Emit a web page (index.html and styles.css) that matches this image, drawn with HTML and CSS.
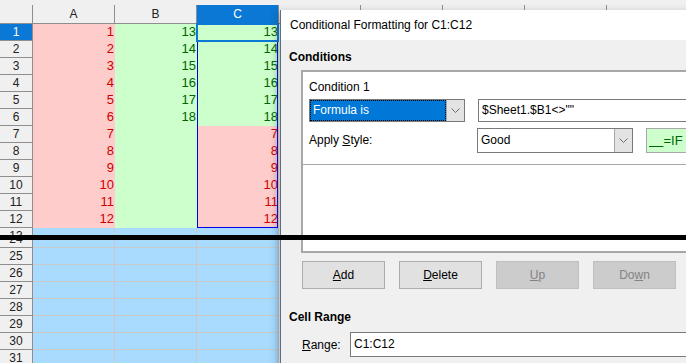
FILE: index.html
```html
<!DOCTYPE html>
<html lang="en">

<head>
    <meta charset="UTF-8">
    <title>Conditional Formatting</title>
    <link rel="stylesheet" href="styles.css">
</head>

<body>
    <div class="screen">

        <div class="sheet">
            <div class="row head">
                <div class="corner"></div>
                <div class="colhead">A</div>
                <div class="colhead">B</div>
                <div class="colhead active">C</div>
                <div class="colhead"></div>
                <div class="colhead"></div>
                <div class="colhead"></div>
                <div class="colhead"></div>
                <div class="colhead"></div>
            </div>

            <div class="row"><div class="rowhead active">1</div><div class="cell bad">1</div><div class="cell good">13</div><div class="cell good">13</div></div>
            <div class="row"><div class="rowhead">2</div><div class="cell bad">2</div><div class="cell good">14</div><div class="cell good">14</div></div>
            <div class="row"><div class="rowhead">3</div><div class="cell bad">3</div><div class="cell good">15</div><div class="cell good">15</div></div>
            <div class="row"><div class="rowhead">4</div><div class="cell bad">4</div><div class="cell good">16</div><div class="cell good">16</div></div>
            <div class="row"><div class="rowhead">5</div><div class="cell bad">5</div><div class="cell good">17</div><div class="cell good">17</div></div>
            <div class="row"><div class="rowhead">6</div><div class="cell bad">6</div><div class="cell good">18</div><div class="cell good">18</div></div>
            <div class="row"><div class="rowhead">7</div><div class="cell bad">7</div><div class="cell good"></div><div class="cell bad">7</div></div>
            <div class="row"><div class="rowhead">8</div><div class="cell bad">8</div><div class="cell good"></div><div class="cell bad">8</div></div>
            <div class="row"><div class="rowhead">9</div><div class="cell bad">9</div><div class="cell good"></div><div class="cell bad">9</div></div>
            <div class="row"><div class="rowhead">10</div><div class="cell bad">10</div><div class="cell good"></div><div class="cell bad">10</div></div>
            <div class="row"><div class="rowhead">11</div><div class="cell bad">11</div><div class="cell good"></div><div class="cell bad">11</div></div>
            <div class="row"><div class="rowhead">12</div><div class="cell bad">12</div><div class="cell good"></div><div class="cell bad">12</div></div>

            <div class="row cut-top"><div class="rowhead">13</div><div class="cell blank"></div><div class="cell blank"></div><div class="cell blank"></div></div>
            <div class="gap"></div>
            <div class="row cut-bottom"><div class="rowhead">24</div><div class="cell blank"></div><div class="cell blank"></div><div class="cell blank"></div></div>
            <div class="row"><div class="rowhead">25</div><div class="cell blank"></div><div class="cell blank"></div><div class="cell blank"></div></div>
            <div class="row"><div class="rowhead">26</div><div class="cell blank"></div><div class="cell blank"></div><div class="cell blank"></div></div>
            <div class="row"><div class="rowhead">27</div><div class="cell blank"></div><div class="cell blank"></div><div class="cell blank"></div></div>
            <div class="row"><div class="rowhead">28</div><div class="cell blank"></div><div class="cell blank"></div><div class="cell blank"></div></div>
            <div class="row"><div class="rowhead">29</div><div class="cell blank"></div><div class="cell blank"></div><div class="cell blank"></div></div>
            <div class="row"><div class="rowhead">30</div><div class="cell blank"></div><div class="cell blank"></div><div class="cell blank"></div></div>
            <div class="row"><div class="rowhead">31</div><div class="cell blank"></div><div class="cell blank"></div><div class="cell blank"></div></div>

            <!-- selection of C1:C12 and the cell cursor -->
            <div class="range-mark"></div>
            <div class="cursor"></div>
        </div>

        <div class="dialog">
            <div class="titlebar">Conditional Formatting for C1:C12</div>
            <div class="dialog-body">
                <div class="section-label">Conditions</div>

                <div class="cond-list">
                    <div class="cond">
                        <div class="cond-title">Condition 1</div>
                        <div class="cond-row">
                            <div class="combo focused">
                                <span class="combo-text">Formula is</span>
                                <span class="combo-btn">
                                    <svg width="9" height="5" viewBox="0 0 9 5"><path d="M0.5 0.5 L4.5 4.5 L8.5 0.5" fill="none" stroke="#6d6d6d" stroke-width="1"/></svg>
                                </span>
                            </div>
                            <div class="field wide">$Sheet1.$B1&lt;&gt;""</div>
                        </div>
                        <div class="cond-row style-row">
                            <div class="cond-label">Apply <u>S</u>tyle:</div>
                            <div class="combo">
                                <span class="combo-text">Good</span>
                                <span class="combo-btn">
                                    <svg width="9" height="5" viewBox="0 0 9 5"><path d="M0.5 0.5 L4.5 4.5 L8.5 0.5" fill="none" stroke="#6d6d6d" stroke-width="1"/></svg>
                                </span>
                            </div>
                            <div class="preview"><u>&nbsp;&nbsp;&nbsp;&nbsp;</u>=IF</div>
                        </div>
                    </div>
                </div>

                <div class="buttons">
                    <button class="btn"><u>A</u>dd</button>
                    <button class="btn"><u>D</u>elete</button>
                    <button class="btn" disabled><u>U</u>p</button>
                    <button class="btn" disabled>Do<u>w</u>n</button>
                </div>

                <div class="section-label range-label">Cell Range</div>
                <div class="range-row">
                    <span class="range-name"><u>R</u>ange:</span>
                    <div class="field range-field">C1:C12</div>
                </div>
            </div>
        </div>

        <div class="cut-line"></div>
    </div>
</body>

</html>
```

FILE: styles.css
```css
body {
    margin: 0;
    font-family: 'Liberation Sans', Arial, sans-serif;
    font-size: 12px;
    color: #000;
    background-color: #fff;
    overflow: hidden;
}

.screen {
    position: relative;
    width: 686px;
    height: 363px;
    overflow: hidden;
}

/* spreadsheet */

.sheet {
    position: relative;
    padding-top: 5px;
    background: linear-gradient(#f0f0f0 0, #f0f0f0 5px, #fff 5px);
}

.row {
    display: grid;
    grid-template-columns: 33px repeat(8, 82px);
    height: 17px;
}

.row.head {
    height: 19px;
}

.corner,
.colhead,
.rowhead,
.cell {
    box-sizing: border-box;
    height: 100%;
}

.corner,
.colhead {
    background-color: #f0f0f0;
    border-right: 1px solid #8e8e8e;
    border-bottom: 1px solid #8e8e8e;
    text-align: center;
    line-height: 18px;
    font-size: 12px;
    color: #222;
}

.colhead.active,
.rowhead.active {
    background-color: #0a78d4;
    color: #fff;
}

.rowhead {
    background-color: #f0f0f0;
    border-right: 1px solid #8e8e8e;
    border-bottom: 1px solid #8e8e8e;
    text-align: center;
    line-height: 16px;
    font-size: 12px;
    color: #222;
}

.cell {
    text-align: right;
    padding-right: 1px;
    line-height: 16px;
    font-size: 13px;
}

.cell.bad {
    background-color: #ffcccc;
    color: #cc0000;
}

.cell.good {
    background-color: #ccffcc;
    color: #006600;
}

.cell.blank {
    background-color: #a9dbfe;
    border-right: 1px solid #c9c9c9;
    border-bottom: 1px solid #c9c9c9;
}

.row.cut-top {
    height: 7px;
    overflow: hidden;
}

.row.cut-top > div {
    height: 17px;
}

.gap {
    height: 5px;
}

.row.cut-bottom {
    height: 8px;
    overflow: hidden;
}

.row.cut-bottom > div {
    height: 17px;
    margin-top: -9px;
}

.range-mark {
    position: absolute;
    left: 197px;
    top: 24px;
    width: 81px;
    height: 204px;
    box-sizing: border-box;
    border: 1px solid #0000ee;
}

.cursor {
    position: absolute;
    left: 196px;
    top: 23px;
    width: 83px;
    height: 19px;
    box-sizing: border-box;
    border: 2px solid #0a78d4;
}

/* dialog window */

.dialog {
    position: absolute;
    left: 280px;
    top: 10px;
    width: 430px;
    height: 370px;
    background-color: #f0f0f0;
    border-left: 1px solid #5d6e80;
    box-shadow: -5px 0 7px -2px rgba(40, 60, 90, 0.35);
}

.titlebar {
    height: 30px;
    line-height: 30px;
    padding-left: 9px;
    background-color: #fff;
    font-size: 12px;
}

.dialog-body {
    padding: 9px 0 0 8px;
}

.section-label {
    font-weight: bold;
    line-height: 16px;
}

.cond-list {
    margin: 5px 0 0 12px;
    height: 179px;
    background-color: #fff;
    border: 2px solid #a7a7a7;
    border-right: none;
}

.cond {
    padding: 7px 0 11px 6px;
    border-bottom: 1px solid #a7a7a7;
    overflow: hidden;
}

.cond-title {
    line-height: 16px;
    margin-bottom: 4px;
}

.cond-row {
    display: flex;
    gap: 13px;
    height: 23px;
}

.cond-row > * {
    flex-shrink: 0;
}

.style-row {
    height: 25px;
    margin-top: 6px;
}

.cond-label {
    width: 155px;
    line-height: 25px;
}

.combo {
    display: flex;
    width: 156px;
    box-sizing: border-box;
    border: 1px solid #7a7a7a;
    background-color: #fff;
}

.combo-text {
    flex: 1;
    padding-left: 3px;
    line-height: 23px;
}

.combo.focused .combo-text {
    background-color: #0078d7;
    color: #fff;
    outline: 1px dotted #000;
    outline-offset: -1px;
    line-height: 21px;
}

.combo-btn {
    display: flex;
    align-items: center;
    justify-content: center;
    width: 17px;
    background-color: #e3e3e3;
    border-left: 1px solid #a8a8a8;
}

.field {
    box-sizing: border-box;
    border: 1px solid #7a7a7a;
    background-color: #fff;
    padding-left: 3px;
    line-height: 21px;
}

.field.wide {
    width: 260px;
}

.preview {
    width: 80px;
    box-sizing: border-box;
    border: 1px solid #a7a7a7;
    background-color: #ccffcc;
    color: #006600;
    padding-left: 2px;
    line-height: 23px;
    font-size: 13px;
}

.buttons {
    display: flex;
    gap: 14px;
    margin: 8px 0 0 13px;
}

.btn {
    flex-shrink: 0;
    width: 83px;
    height: 28px;
    padding: 0;
    font-family: 'Liberation Sans', Arial, sans-serif;
    font-size: 12px;
    color: #000;
    background-color: #e1e1e1;
    border: 1px solid #adadad;
}

.btn:disabled {
    background-color: #cccccc;
    border-color: #bfbfbf;
    color: #838383;
}

.range-label {
    margin-top: 20px;
}

.range-row {
    display: flex;
    align-items: center;
    gap: 14px;
    margin: 7px 0 0 13px;
}

.range-name {
    width: 34px;
}

.range-field {
    flex-shrink: 0;
    width: 340px;
    height: 25px;
    line-height: 23px;
}

.cut-line {
    position: absolute;
    left: 0;
    top: 235px;
    width: 686px;
    height: 5px;
    background-color: #000;
}
```
